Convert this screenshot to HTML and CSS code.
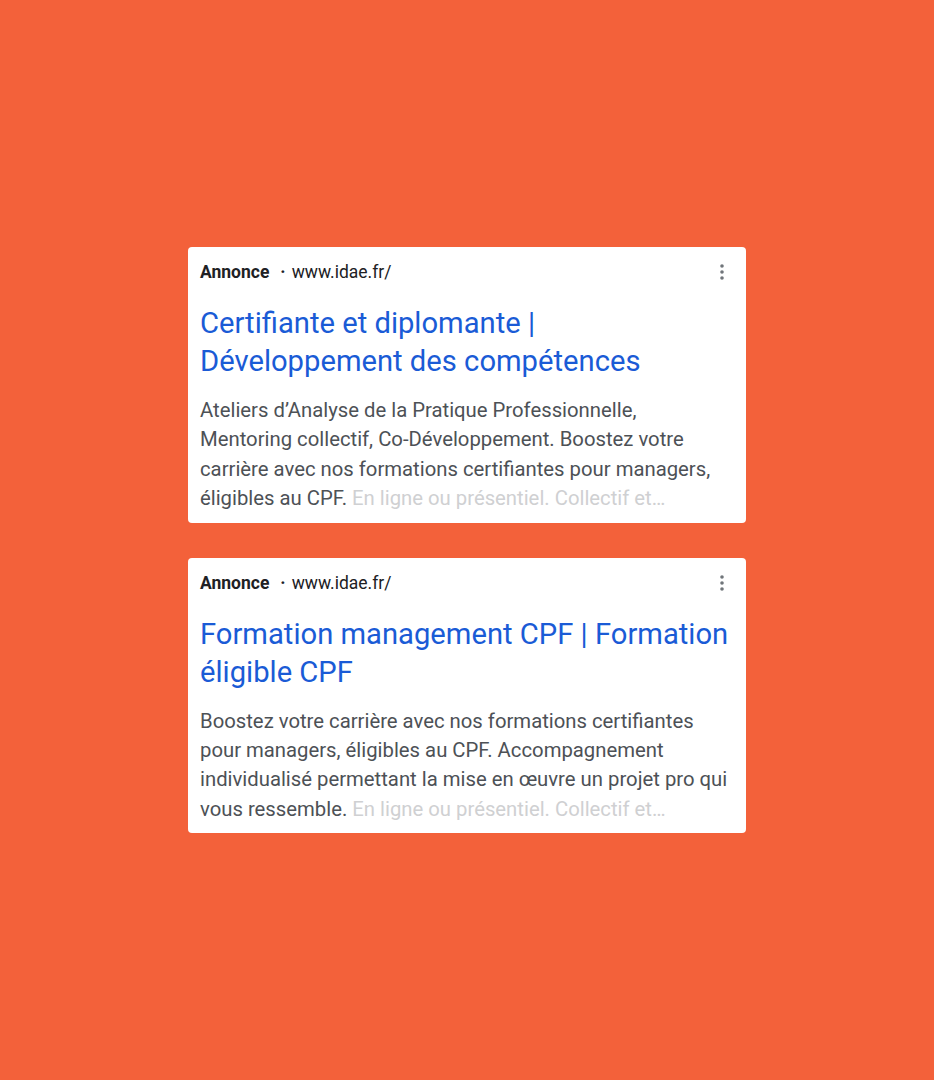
FILE: index.html
```html
<!DOCTYPE html>
<html lang="fr">
<head>
<meta charset="utf-8">
<title>Annonces</title>
<link rel="stylesheet" href="styles.css">
</head>
<body>
<main class="stage">
  <article class="ad">
    <header class="ad-head">
      <span class="ad-label">Annonce</span>
      <span class="ad-sep">·</span>
      <span class="ad-url">www.idae.fr/</span>
      <svg class="ad-more" width="4" height="16" viewBox="0 0 4 16" aria-hidden="true">
        <circle cx="2" cy="2" r="1.8"/>
        <circle cx="2" cy="8" r="1.8"/>
        <circle cx="2" cy="14" r="1.8"/>
      </svg>
    </header>
    <h2 class="ad-title">Certifiante et diplomante | Développement des compétences</h2>
    <p class="ad-desc">Ateliers d’Analyse de la Pratique Professionnelle, Mentoring collectif, Co-Développement. Boostez votre carrière avec nos formations certifiantes pour managers, éligibles au CPF. <span class="ad-fade">En ligne ou présentiel. Collectif et…</span></p>
  </article>
  <article class="ad">
    <header class="ad-head">
      <span class="ad-label">Annonce</span>
      <span class="ad-sep">·</span>
      <span class="ad-url">www.idae.fr/</span>
      <svg class="ad-more" width="4" height="16" viewBox="0 0 4 16" aria-hidden="true">
        <circle cx="2" cy="2" r="1.8"/>
        <circle cx="2" cy="8" r="1.8"/>
        <circle cx="2" cy="14" r="1.8"/>
      </svg>
    </header>
    <h2 class="ad-title">Formation management CPF | Formation éligible CPF</h2>
    <p class="ad-desc">Boostez votre carrière avec nos formations certifiantes pour managers, éligibles au CPF. Accompagnement individualisé permettant la mise en œuvre un projet pro qui vous ressemble. <span class="ad-fade">En ligne ou présentiel. Collectif et…</span></p>
  </article>
</main>
</body>
</html>
```

FILE: styles.css
```css
html, body {
  margin: 0;
  padding: 0;
}
body {
  background: #f3613a;
  font-family: Roboto, "Liberation Sans", sans-serif;
}
.stage {
  min-height: 1080px;
  display: flex;
  flex-direction: column;
  align-items: center;
  justify-content: center;
  gap: 35px;
}
.ad {
  width: 558px;
  box-sizing: border-box;
  background: #fff;
  border-radius: 4px;
  padding: 13px 16px 9px 12px;
}
.ad-head {
  display: flex;
  align-items: center;
  height: 24px;
  font-size: 17.5px;
  color: #202124;
}
.ad-label {
  font-weight: 700;
}
.ad-sep {
  margin: 0 6px 0 11px;
  font-weight: 700;
}
.ad-url {
  flex: 1;
}
.ad-more {
  fill: #70757a;
  margin-right: 6px;
}
.ad-title {
  margin: 20px 0 0;
  font-weight: 400;
  font-size: 29.2px;
  line-height: 38px;
  color: #1a5bd6;
}
.ad-desc {
  margin: 16px 0 0;
  font-size: 20.3px;
  line-height: 29.4px;
  color: #4d5156;
}
.ad-fade {
  color: #cfd0d2;
}
```
